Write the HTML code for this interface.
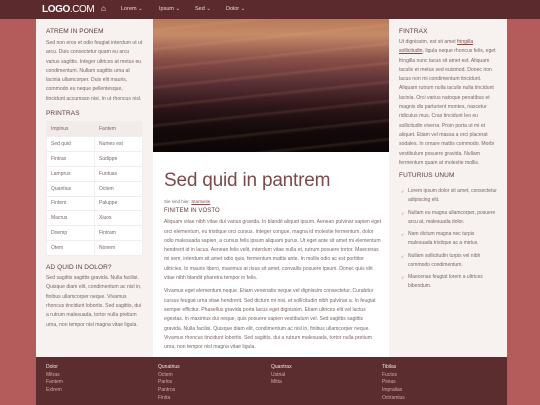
<!DOCTYPE html>
<html><head><meta charset="utf-8"><style>
*{margin:0;padding:0;box-sizing:border-box}
body{width:540px;height:405px;overflow:hidden;background:#b35c5b;font-family:"Liberation Sans",sans-serif;color:#6e5a5a;position:relative}
.nav{position:absolute;left:0;top:0;width:540px;height:19px;background:#5a2a2d;color:#eee}
.nav .logo{position:absolute;left:42px;top:4px;font-size:10px;color:#fff;letter-spacing:-0.4px}
.nav .logo b{font-weight:bold}
.nav span.i{position:absolute;top:6px;font-size:5.5px;color:#e8dcdc}
.left{position:absolute;left:36px;top:19px;width:117px;height:338px;background:#f7f1f0;padding:0 10px}
.main{position:absolute;left:153px;top:19px;width:236px;height:338px;background:#fff}
.right{position:absolute;left:389px;top:19px;width:118px;height:338px;background:#f7f1f0;padding:0 10px}
h4{font-size:6.5px;font-weight:normal;color:#5a3a3a;letter-spacing:.1px}
p{font-size:5.1px;line-height:9.3px;color:#7a6666}
.img{position:absolute;left:0;top:0;width:236px;height:133px;background:
repeating-linear-gradient(174deg,rgba(255,200,150,0) 0 9px,rgba(255,190,140,.12) 11px,rgba(0,0,0,0) 14px 19px),
linear-gradient(180deg,#b87a5c 0%,#c58a68 12%,#8a5048 30%,#5a3035 48%,#2e1619 66%,#150a0c 82%,#0b0506 100%)}
table{border-collapse:collapse;width:97px;font-size:5px;color:#7a6666}
td{border:1px solid #eee;height:14.9px;padding-left:4px;background:#fff;width:50%}
tr:first-child td{background:#f3ebea}
ul{list-style:none;font-size:5px;line-height:9px;color:#7a6666}
ul li{padding-left:9px;position:relative;margin-bottom:3.5px}
ul li:before{content:"✓";position:absolute;left:2px;font-size:4px}
.foot{position:absolute;left:36px;top:357px;width:471px;height:48px;background:#5b2d2f}
.col{position:absolute;top:7px;font-size:5px;line-height:7.7px;color:#d8a8a4}
.col b{color:#f2e6e6;font-weight:normal}
a{color:#8a4a4a;text-decoration:underline}
</style></head><body>
<div class="nav"><div class="logo"><b>LOGO</b>.COM</div>
<span class="i" style="left:101px;top:4px;font-size:8px;color:#fff">⌂</span>
<span class="i" style="left:121px">Lorem ⌄</span>
<span class="i" style="left:159px">Ipsum ⌄</span>
<span class="i" style="left:195px">Sed ⌄</span>
<span class="i" style="left:226px">Dolor ⌄</span></div>
<div class="left">
<h4 style="margin-top:9px">ATREM IN PONEM</h4>
<p style="margin-top:4px">Sed non eros et odio feugiat interdum ut ut arcu. Duis consectetur quam eu arcu varius sagittis. Integer ultrices at metus eu condimentum. Nullam sagittis urna at lacinia ullamcorper. Duis elit mauris, commodo eu neque pellentesque, tincidunt accumsan nisi. In ut rhoncus nisl.</p>
<h4 style="margin-top:6px">PRINTRAS</h4>
<table style="margin-top:4px">
<tr><td>Impinus</td><td>Fantem</td></tr><tr><td>Sed quid</td><td>Numes est</td></tr><tr><td>Fintrax</td><td>Sudippe</td></tr><tr><td>Lamprus</td><td>Funtuas</td></tr><tr><td>Quantius</td><td>Octem</td></tr><tr><td>Fintem</td><td>Paluppe</td></tr><tr><td>Macrus</td><td>Xiuos</td></tr><tr><td>Doemp</td><td>Fintram</td></tr><tr><td>Otem</td><td>Nonem</td></tr></table>
<h4 style="margin-top:8px">AD QUID IN DOLOR?</h4>
<p style="margin-top:3px">Sed sagittis sagittis gravida. Nulla facilisi. Quisque diam elit, condimentum ac nisl in, finibus ullamcorper neque. Vivamus rhoncus tincidunt lobortis. Sed sagittis, dui a rutrum malesuada, tortor nulla pretium urna, non tempor nisl magna vitae ligula.</p>
</div>
<div class="main"><div class="img"></div>
<div style="position:absolute;left:11px;top:151px;width:218px">
<div style="font-size:19px;color:#7b4a4c;letter-spacing:-.2px">Sed quid in pantrem</div>
<p style="margin-top:5px;font-size:4.5px">Sie sind hier: <a>Startseite</a></p>
<h4 style="margin-top:2px;font-size:6px">FINITEM IN VOSTO</h4>
<p style="margin-top:4px">Aliquam vitae nibh vitae dui varius gravida. In blandit aliquet ipsum. Aenean pulvinar sapien eget orci elementum, eu tristique orci cursus. Integer congue, magna id molestie fermentum, dolor odio malesuada sapien, a cursus felis ipsum aliquam purus. Ut eget ante sit amet mi elementum hendrerit id in lacus. Aenean felis velit, interdum vitae nulla et, rutrum posuere tortor. Maecenas mi sem, interdum sit amet odio quis, fermentum mattis ante. In mollis odio ac est porttitor ultricies. In mauris libero, maximus at risus sit amet, convallis posuere ipsum. Donec quis elit vitae nibh blandit pharetra tempor in felis.</p>
<p style="margin-top:4px">Vivamus eget elementum neque. Etiam venenatis neque vel dignissim consectetur. Curabitur cursus feugiat urna vitae hendrerit. Sed dictum mi nisi, et sollicitudin nibh pulvinar a. In feugiat semper efficitur. Phasellus gravida porta lacus eget dignissim. Etiam ultrices elit vel luctus egestas. In maximus dui neque, quis posuere sapien vestibulum vel. Sed sagittis sagittis gravida. Nulla facilisi. Quisque diam elit, condimentum ac nisl in, finibus ullamcorper neque. Vivamus rhoncus tincidunt lobortis. Sed sagittis, dui a rutrum malesuada, tortor nulla pretium urna, non tempor nisl magna vitae ligula.</p>
</div></div>
<div class="right">
<h4 style="margin-top:9px">FINTRAX</h4>
<p style="margin-top:3px">Ut dignissim, est sit amet <a>fringilla sollicitudin</a>, ligula neque rhoncus felis, eget fringilla nunc lacus sit amet est. Aliquam iaculis et metus sed euismod. Donec non lacus non mi condimentum tincidunt. Aliquam rutrum nulla iaculis nulla tincidunt lacinia. Orci varius natoque penatibus et magnis dis parturient montes, nascetur ridiculus mus. Cras tincidunt leo eu sollicitudin viverra. Proin porta ut mi et aliquet. Etiam vel massa a orci placerat sodales. In ornare mattis commodo. Morbi vestibulum posuere gravida. Nullam fermentum quam at molestie mollis.</p>
<h4 style="margin-top:4px">FUTURIUS UNUM</h4>
<ul style="margin-top:8px">
<li>Lorem ipsum dolor sit amet, consectetur adipiscing elit.</li>
<li>Nullam eu magna ullamcorper, posuere arcu at, malesuada dolor.</li>
<li>Nam dictum magna nec turpis malesuada tristique ac a metus.</li>
<li>Nullam sollicitudin turpis vel nibh commodo condimentum.</li>
<li>Maecenas feugiat lorem a ultrices bibendum.</li></ul>
</div>
<div class="foot">
<div class="col" style="left:10px"><b>Dolor</b><br>Mitras<br>Fantem<br>Extrem</div>
<div class="col" style="left:122px"><b>Qunatrius</b><br>Octem<br>Parlos<br>Pantros<br>Finita</div>
<div class="col" style="left:235px"><b>Quantrax</b><br>Ustrial<br>Mitta</div>
<div class="col" style="left:346px"><b>Tibilas</b><br>Fuctos<br>Pinias<br>Impralias<br>Octramius</div>
</div>
</body></html>
